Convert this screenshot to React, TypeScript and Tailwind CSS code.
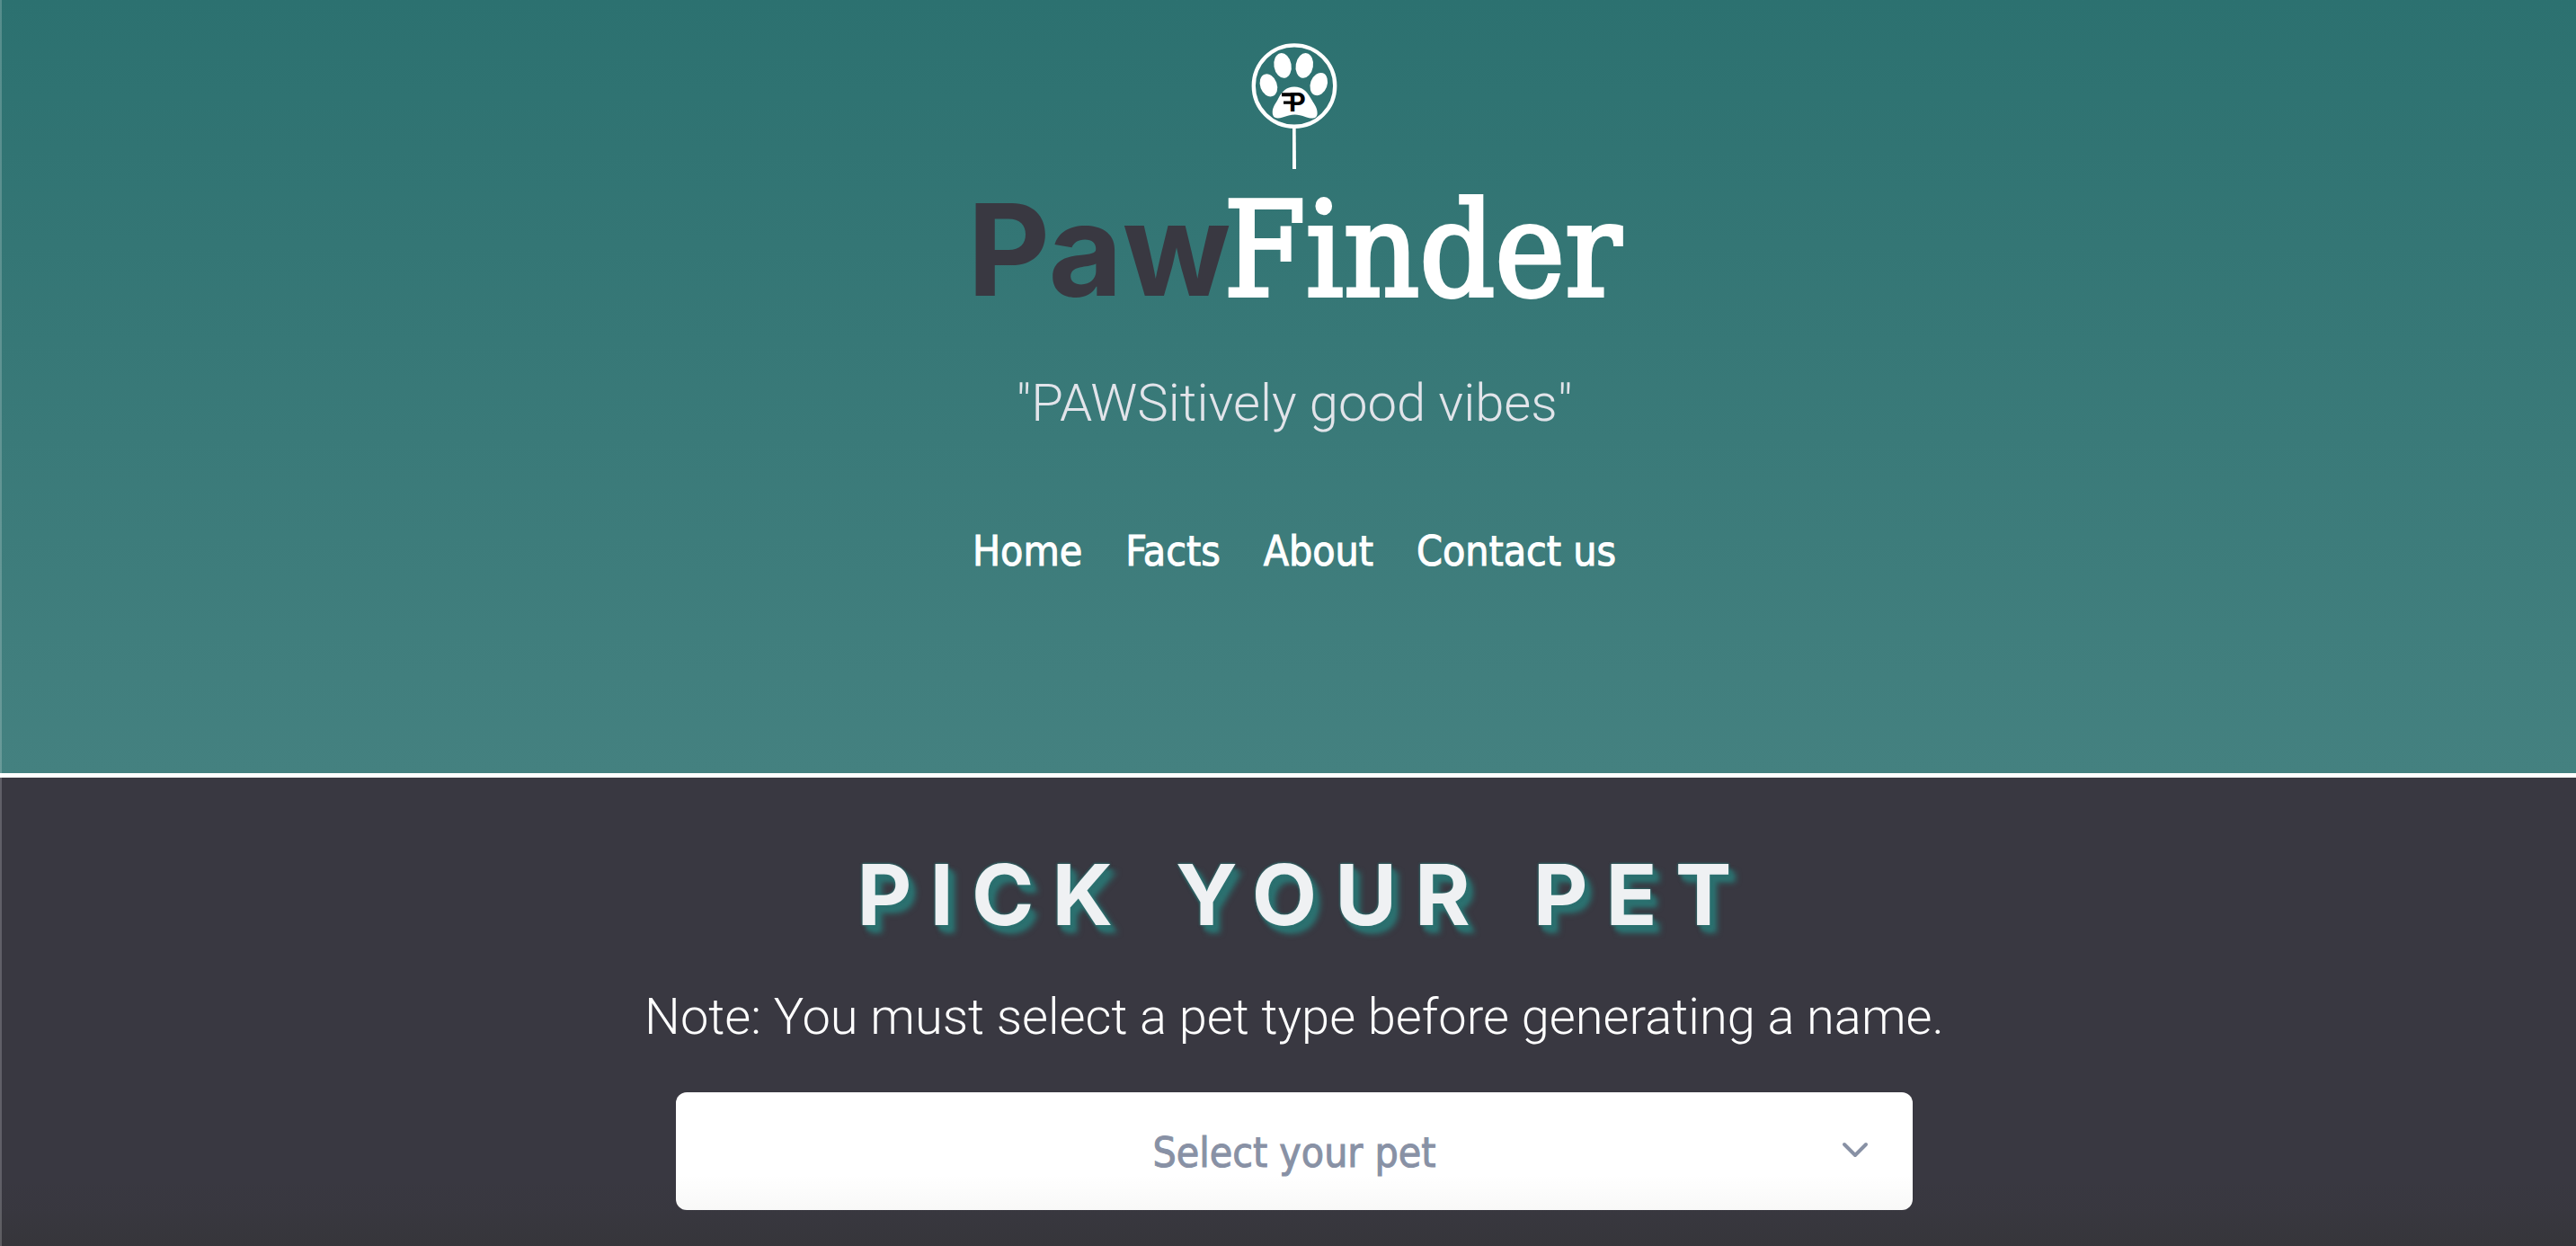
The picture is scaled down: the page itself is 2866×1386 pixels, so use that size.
import { ChevronDown } from "lucide-react";

const links = ["Home", "Facts", "About", "Contact us"];

function PawLogo() {
  return (
    <svg viewBox="0 0 288 424" className="h-[141px] w-24" role="img" aria-label="PawFinder logo">
      <circle cx="144" cy="143" r="136" fill="none" stroke="#fff" strokeWidth="13" />
      <path d="M138 282h11l1 139h-12z" fill="#fff" />
      <g fill="#fff">
        <ellipse cx="105" cy="75" rx="29" ry="42" transform="rotate(-10 105 75)" />
        <ellipse cx="178" cy="75" rx="29" ry="42" transform="rotate(10 178 75)" />
        <ellipse cx="58" cy="141" rx="28" ry="39" transform="rotate(-20 58 141)" />
        <ellipse cx="226" cy="137" rx="28" ry="39" transform="rotate(20 226 137)" />
        <path d="M144 146C171 146 186 161 199 184C210 203 222 216 221 235C220 255 200 253 183 247C168 242 157 239 146 239C132 239 118 244 105 248C86 254 71 252 71 231C71 213 82 202 91 184C103 162 118 146 144 146Z" />
      </g>
      <path d="M102 166h40v12h-40zM108 194h34v10h-34z" fill="#000" />
      <text x="126" y="229" fontFamily="Inter, sans-serif" fontSize="87" fontWeight="700" fill="#000">
        P
      </text>
    </svg>
  );
}

export default function App() {
  return (
    <div className="relative flex min-h-screen flex-col overflow-hidden bg-[#393841] font-[Inter,sans-serif] text-white">
      <header className="flex flex-col items-center border-b-[5px] border-white bg-linear-to-b from-[#2c7170] to-[#448180] pt-12 pb-[217px] pl-3.5">
        <PawLogo />
        <h1 className="mt-2 flex items-baseline leading-[160px]">
          <span className="text-[142px] font-bold text-[#393841]">Paw</span>
          <span className="-ml-2 font-['DejaVu_Serif_Condensed','DejaVu_Serif',serif] text-[146px] font-normal [-webkit-text-stroke:4px_white]">
            Finder
          </span>
        </h1>
        <p className="mt-[54px] font-[Roboto,sans-serif] text-[58px] leading-[72px] font-light text-[#e2e4ea]">
          "PAWSitively good vibes"
        </p>
        <nav className="mt-[99px] flex gap-12 font-['DejaVu_Sans_Condensed','DejaVu_Sans',sans-serif] text-[46px] leading-[60px] [-webkit-text-stroke:1px_white]">
          {links.map((label) => (
            <a key={label} href="#">
              {label}
            </a>
          ))}
        </nav>
      </header>

      <main className="flex grow flex-col items-center pt-[72px] pl-3.5">
        <h2 className="flex gap-[50px] pl-5 text-[94px] leading-[116px] font-bold tracking-[20px] text-[#eff1f3] uppercase [text-shadow:0_0_3px_#2c7170,0_0_3px_#2c7170,4px_6px_4px_#2c7170,8px_9px_6px_#2c7170]">
          <span>Pick</span> <span>your</span> <span>pet</span>
        </h2>
        <label htmlFor="pet" className="mt-[42px] font-[Roboto,sans-serif] text-[56px] leading-[72px] font-light">
          Note: You must select a pet type before generating a name.
        </label>
        <div className="relative mt-12 w-[48vw]">
          <select
            id="pet"
            defaultValue=""
            className="h-[131px] w-full appearance-none rounded-xl bg-white px-12 pt-1 font-['DejaVu_Sans_Condensed','DejaVu_Sans',sans-serif] text-[46px] text-[#8891a5] [-webkit-text-stroke:1px_#8891a5] [text-align-last:center]"
          >
            <option value="">Select your pet</option>
            <option value="dog">Dog</option>
            <option value="cat">Cat</option>
          </select>
          <ChevronDown className="pointer-events-none absolute top-10 right-10 size-12 text-[#8891a5]" strokeWidth={2} />
        </div>
      </main>

      <div className="pointer-events-none absolute inset-x-0 bottom-0 h-20 bg-linear-to-b from-transparent via-[#20240a]/3 to-[#20240a]/12" />
      <div className="pointer-events-none absolute inset-y-0 left-0 w-0.5 bg-white/20" />
    </div>
  );
}
